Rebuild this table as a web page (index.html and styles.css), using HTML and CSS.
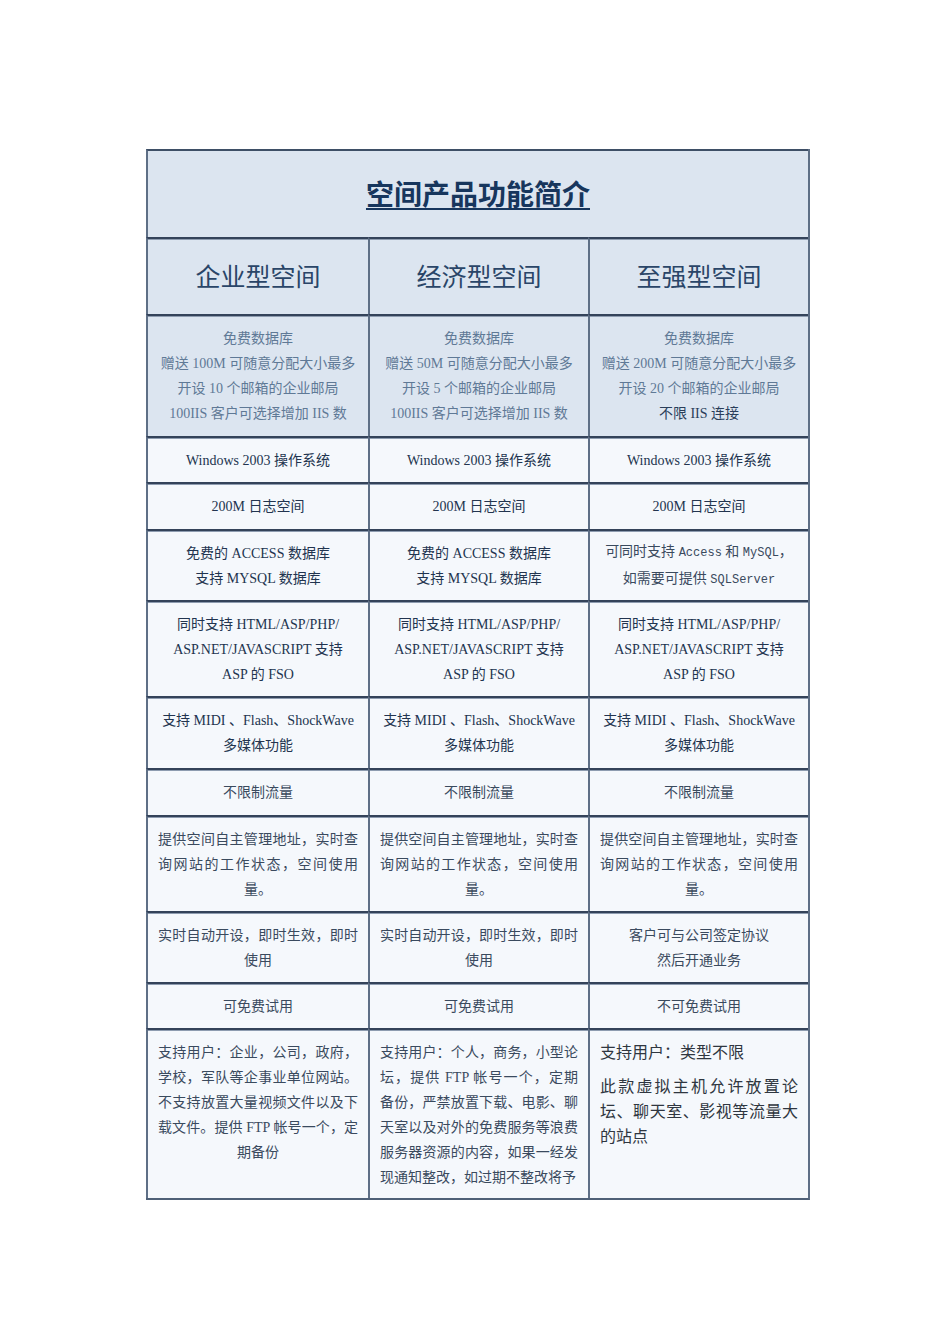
FILE: index.html
```html
<!DOCTYPE html>
<html lang="zh-CN">
<head>
<meta charset="utf-8">
<title>空间产品功能简介</title>
<link rel="stylesheet" href="styles.css">
</head>
<body>
<div class="page">
  <div class="grid">
    <div class="cell title-cell"><h1 class="title">空间产品功能简介</h1></div>

    <div class="cell head"><p class="t">企业型空间</p></div>
    <div class="cell head"><p class="t">经济型空间</p></div>
    <div class="cell head"><p class="t">至强型空间</p></div>

    <div class="cell shade muted"><p class="t">免费数据库<br>赠送 100M 可随意分配大小最多<br>开设 10 个邮箱的企业邮局<br>100IIS 客户可选择增加 IIS 数</p></div>
    <div class="cell shade muted"><p class="t">免费数据库<br>赠送 50M 可随意分配大小最多<br>开设 5 个邮箱的企业邮局<br>100IIS 客户可选择增加 IIS 数</p></div>
    <div class="cell shade muted"><p class="t">免费数据库<br>赠送 200M 可随意分配大小最多<br>开设 20 个邮箱的企业邮局<br><span class="dark">不限 IIS 连接</span></p></div>

    <div class="cell"><p class="t">Windows 2003 操作系统</p></div>
    <div class="cell"><p class="t">Windows 2003 操作系统</p></div>
    <div class="cell"><p class="t">Windows 2003 操作系统</p></div>

    <div class="cell"><p class="t">200M 日志空间</p></div>
    <div class="cell"><p class="t">200M 日志空间</p></div>
    <div class="cell"><p class="t">200M 日志空间</p></div>

    <div class="cell"><p class="t">免费的 ACCESS 数据库<br>支持 MYSQL 数据库</p></div>
    <div class="cell"><p class="t">免费的 ACCESS 数据库<br>支持 MYSQL 数据库</p></div>
    <div class="cell grey"><p class="t nowrap">可同时支持 <span class="mono">Access</span> 和 <span class="mono">MySQL</span>，<br>如需要可提供 <span class="mono">SQLServer</span></p></div>

    <div class="cell"><p class="t">同时支持 HTML/ASP/PHP/<br>ASP.NET/JAVASCRIPT 支持<br>ASP 的 FSO</p></div>
    <div class="cell"><p class="t">同时支持 HTML/ASP/PHP/<br>ASP.NET/JAVASCRIPT 支持<br>ASP 的 FSO</p></div>
    <div class="cell"><p class="t">同时支持 HTML/ASP/PHP/<br>ASP.NET/JAVASCRIPT 支持<br>ASP 的 FSO</p></div>

    <div class="cell"><p class="t">支持 MIDI 、Flash、ShockWave<br>多媒体功能</p></div>
    <div class="cell"><p class="t">支持 MIDI 、Flash、ShockWave<br>多媒体功能</p></div>
    <div class="cell"><p class="t">支持 MIDI 、Flash、ShockWave<br>多媒体功能</p></div>

    <div class="cell grey"><p class="t">不限制流量</p></div>
    <div class="cell grey"><p class="t">不限制流量</p></div>
    <div class="cell grey"><p class="t">不限制流量</p></div>

    <div class="cell grey"><p class="just-center">提供空间自主管理地址，实时查询网站的工作状态，空间使用量。</p></div>
    <div class="cell grey"><p class="just-center">提供空间自主管理地址，实时查询网站的工作状态，空间使用量。</p></div>
    <div class="cell grey"><p class="just-center">提供空间自主管理地址，实时查询网站的工作状态，空间使用量。</p></div>

    <div class="cell grey"><p class="just-center">实时自动开设，即时生效，即时使用</p></div>
    <div class="cell grey"><p class="just-center">实时自动开设，即时生效，即时使用</p></div>
    <div class="cell grey"><p class="t">客户可与公司签定协议<br>然后开通业务</p></div>

    <div class="cell grey"><p class="t">可免费试用</p></div>
    <div class="cell grey"><p class="t">可免费试用</p></div>
    <div class="cell grey"><p class="t">不可免费试用</p></div>

    <div class="cell grey top"><p class="just-center">支持用户：企业，公司，政府，学校，军队等企事业单位网站。不支持放置大量视频文件以及下载文件。提供 FTP 帐号一个，定期备份</p></div>
    <div class="cell grey top"><p class="just">支持用户：个人，商务，小型论坛，提供 FTP 帐号一个，定期备份，严禁放置下载、电影、聊天室以及对外的免费服务等浪费服务器资源的内容，如果一经发现通知整改，如过期不整改将予</p></div>
    <div class="cell top big">
      <div class="stack">
        <p class="plain">支持用户：类型不限</p>
        <p class="just">此款虚拟主机允许放置论坛、聊天室、影视等流量大的站点</p>
      </div>
    </div>
  </div>
</div>
</body>
</html>
```

FILE: styles.css
```css
html, body {
  margin: 0;
  padding: 0;
  background: #ffffff;
}

body {
  font-family: "Liberation Serif", "Noto Sans CJK SC", serif;
  font-size: 14px;
  line-height: 25px;
  color: #22344f;
}

.page {
  padding: 149px 0 0 146px;
}

.grid {
  display: grid;
  grid-template-columns: 222px 220px 220px;
  grid-template-rows: 88px 77px 122px 46px 47px 71px 96px 72px 47px 96px 71px 46px 170px;
  width: 662px;
  border-right: 2px solid #5e6f86;
  border-bottom: 2px solid #4f6077;
}

.cell {
  box-sizing: border-box;
  border-top: 2px solid #34435a;
  border-left: 2px solid #5e6f86;
  box-shadow: inset 0 1px 0 #8e9cb0;
  background: #f5f8fc;
  padding: 0 10px;
  display: flex;
  flex-direction: column;
  align-items: stretch;
  justify-content: center;
  text-align: center;
  overflow: hidden;
}

.t {
  margin: 0;
  text-align: center;
}

.nowrap {
  white-space: nowrap;
}

.title-cell {
  grid-column: 1 / 4;
  background: #dce5f0;
  border-top-color: #3e4f66;
  box-shadow: none;
  align-items: center;
  padding-top: 3px;
}

.title {
  margin: 0;
  font-size: 28px;
  line-height: 36px;
  font-weight: bold;
  color: #17365d;
  text-decoration: underline;
  text-underline-offset: 3px;
  text-decoration-thickness: 2px;
}

.head {
  background: #dce5f0;
  font-size: 25px;
  line-height: 32px;
  color: #2a4568;
  padding-top: 3px;
}

.shade {
  background: #dce5f0;
  white-space: nowrap;
}

.muted {
  color: #5f7996;
}

.dark {
  color: #2a3e5a;
}

.grey {
  color: #3a4a5e;
}

.mono {
  font-family: "Liberation Mono", "DejaVu Sans Mono", monospace;
  font-size: 12px;
}

.just-center {
  margin: 0;
  text-align: justify;
  text-align-last: center;
}

.just {
  margin: 0;
  text-align: justify;
}

.top {
  justify-content: flex-start;
  padding-top: 10px;
}

.big {
  font-size: 16px;
  color: #2f3640;
}

.stack {
  display: flex;
  flex-direction: column;
  gap: 9px;
}

.plain {
  margin: 0;
  text-align: left;
}
```
